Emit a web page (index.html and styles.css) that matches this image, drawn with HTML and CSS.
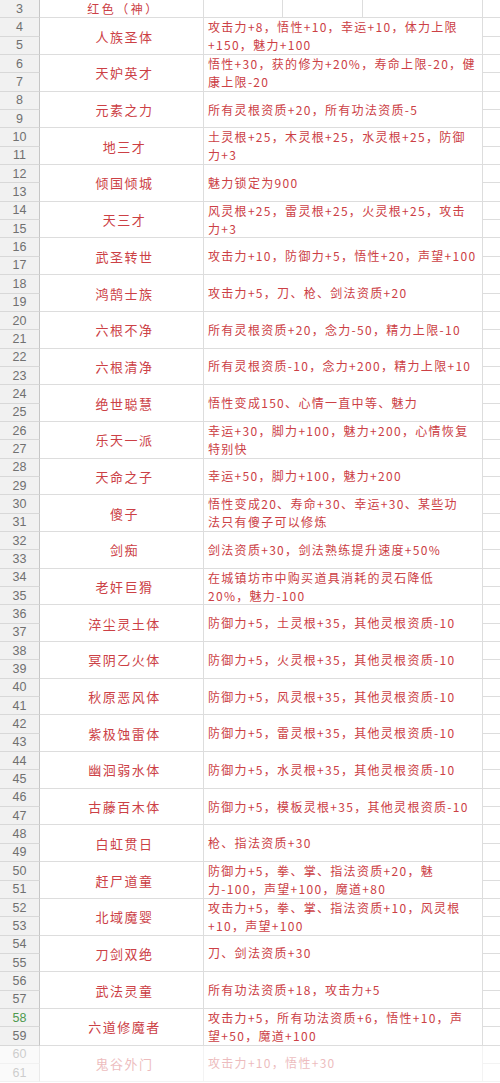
FILE: index.html
```html
<!DOCTYPE html>
<html lang="zh-CN">
<head>
<meta charset="utf-8">
<link rel="stylesheet" href="styles.css">
</head>
<body>
<div class="sheet">
  <div class="hdr">3</div><div class="cell title">红色（神）</div><div class="cell c3"></div><div class="cell d3"></div><div class="cell e3"></div><div class="cell ext"></div>

  <div class="hdr">4</div><div class="cell name">人族圣体</div><div class="cell desc">攻击力+8，悟性+10，幸运+10，体力上限<br>+150，魅力+100</div><div class="cell ext"></div>
  <div class="hdr">5</div><div class="cell ext"></div>

  <div class="hdr">6</div><div class="cell name">天妒英才</div><div class="cell desc">悟性+30，获的修为+20%，寿命上限-20，健<br>康上限-20</div><div class="cell ext"></div>
  <div class="hdr">7</div><div class="cell ext"></div>

  <div class="hdr">8</div><div class="cell name">元素之力</div><div class="cell desc">所有灵根资质+20，所有功法资质-5</div><div class="cell ext"></div>
  <div class="hdr">9</div><div class="cell ext"></div>

  <div class="hdr">10</div><div class="cell name">地三才</div><div class="cell desc">土灵根+25，木灵根+25，水灵根+25，防御<br>力+3</div><div class="cell ext"></div>
  <div class="hdr">11</div><div class="cell ext"></div>

  <div class="hdr">12</div><div class="cell name">倾国倾城</div><div class="cell desc">魅力锁定为900</div><div class="cell ext"></div>
  <div class="hdr">13</div><div class="cell ext"></div>

  <div class="hdr">14</div><div class="cell name">天三才</div><div class="cell desc">风灵根+25，雷灵根+25，火灵根+25，攻击<br>力+3</div><div class="cell ext"></div>
  <div class="hdr">15</div><div class="cell ext"></div>

  <div class="hdr">16</div><div class="cell name">武圣转世</div><div class="cell desc">攻击力+10，防御力+5，悟性+20，声望+100</div><div class="cell ext"></div>
  <div class="hdr">17</div><div class="cell ext"></div>

  <div class="hdr">18</div><div class="cell name">鸿鹄士族</div><div class="cell desc">攻击力+5，刀、枪、剑法资质+20</div><div class="cell ext"></div>
  <div class="hdr">19</div><div class="cell ext"></div>

  <div class="hdr">20</div><div class="cell name">六根不净</div><div class="cell desc">所有灵根资质+20，念力-50，精力上限-10</div><div class="cell ext"></div>
  <div class="hdr">21</div><div class="cell ext"></div>

  <div class="hdr">22</div><div class="cell name">六根清净</div><div class="cell desc">所有灵根资质-10，念力+200，精力上限+10</div><div class="cell ext"></div>
  <div class="hdr">23</div><div class="cell ext"></div>

  <div class="hdr">24</div><div class="cell name">绝世聪慧</div><div class="cell desc">悟性变成150、心情一直中等、魅力</div><div class="cell ext"></div>
  <div class="hdr">25</div><div class="cell ext"></div>

  <div class="hdr">26</div><div class="cell name">乐天一派</div><div class="cell desc">幸运+30，脚力+100，魅力+200，心情恢复<br>特别快</div><div class="cell ext"></div>
  <div class="hdr">27</div><div class="cell ext"></div>

  <div class="hdr">28</div><div class="cell name">天命之子</div><div class="cell desc">幸运+50，脚力+100，魅力+200</div><div class="cell ext"></div>
  <div class="hdr">29</div><div class="cell ext"></div>

  <div class="hdr">30</div><div class="cell name">傻子</div><div class="cell desc">悟性变成20、寿命+30、幸运+30、某些功<br>法只有傻子可以修炼</div><div class="cell ext"></div>
  <div class="hdr">31</div><div class="cell ext"></div>

  <div class="hdr">32</div><div class="cell name">剑痴</div><div class="cell desc">剑法资质+30，剑法熟练提升速度+50%</div><div class="cell ext"></div>
  <div class="hdr">33</div><div class="cell ext"></div>

  <div class="hdr">34</div><div class="cell name">老奸巨猾</div><div class="cell desc">在城镇坊市中购买道具消耗的灵石降低<br>20%，魅力-100</div><div class="cell ext"></div>
  <div class="hdr">35</div><div class="cell ext"></div>

  <div class="hdr">36</div><div class="cell name">淬尘灵土体</div><div class="cell desc">防御力+5，土灵根+35，其他灵根资质-10</div><div class="cell ext"></div>
  <div class="hdr">37</div><div class="cell ext"></div>

  <div class="hdr">38</div><div class="cell name">冥阴乙火体</div><div class="cell desc">防御力+5，火灵根+35，其他灵根资质-10</div><div class="cell ext"></div>
  <div class="hdr">39</div><div class="cell ext"></div>

  <div class="hdr">40</div><div class="cell name">秋原恶风体</div><div class="cell desc">防御力+5，风灵根+35，其他灵根资质-10</div><div class="cell ext"></div>
  <div class="hdr">41</div><div class="cell ext"></div>

  <div class="hdr">42</div><div class="cell name">紫极蚀雷体</div><div class="cell desc">防御力+5，雷灵根+35，其他灵根资质-10</div><div class="cell ext"></div>
  <div class="hdr">43</div><div class="cell ext"></div>

  <div class="hdr">44</div><div class="cell name">幽洄弱水体</div><div class="cell desc">防御力+5，水灵根+35，其他灵根资质-10</div><div class="cell ext"></div>
  <div class="hdr">45</div><div class="cell ext"></div>

  <div class="hdr">46</div><div class="cell name">古藤百木体</div><div class="cell desc">防御力+5，模板灵根+35，其他灵根资质-10</div><div class="cell ext"></div>
  <div class="hdr">47</div><div class="cell ext"></div>

  <div class="hdr">48</div><div class="cell name">白虹贯日</div><div class="cell desc">枪、指法资质+30</div><div class="cell ext"></div>
  <div class="hdr">49</div><div class="cell ext"></div>

  <div class="hdr">50</div><div class="cell name">赶尸道童</div><div class="cell desc">防御力+5，拳、掌、指法资质+20，魅<br>力-100，声望+100，魔道+80</div><div class="cell ext"></div>
  <div class="hdr">51</div><div class="cell ext"></div>

  <div class="hdr">52</div><div class="cell name">北域魔婴</div><div class="cell desc">攻击力+5，拳、掌、指法资质+10，风灵根<br>+10，声望+100</div><div class="cell ext"></div>
  <div class="hdr">53</div><div class="cell ext"></div>

  <div class="hdr">54</div><div class="cell name">刀剑双绝</div><div class="cell desc">刀、剑法资质+30</div><div class="cell ext"></div>
  <div class="hdr">55</div><div class="cell ext"></div>

  <div class="hdr">56</div><div class="cell name">武法灵童</div><div class="cell desc">所有功法资质+18，攻击力+5</div><div class="cell ext"></div>
  <div class="hdr">57</div><div class="cell ext"></div>

  <div class="hdr active">58</div><div class="cell name">六道修魔者</div><div class="cell desc">攻击力+5，所有功法资质+6，悟性+10，声<br>望+50，魔道+100</div><div class="cell ext"></div>
  <div class="hdr">59</div><div class="cell ext"></div>

  <div class="hdr faded">60</div><div class="cell name faded">鬼谷外门</div><div class="cell desc faded">攻击力+10，悟性+30</div><div class="cell ext faded"></div>
  <div class="hdr faded">61</div><div class="cell ext faded"></div>
</div>
</body>
</html>
```

FILE: styles.css
```css
* {
  box-sizing: border-box;
}

html,
body {
  margin: 0;
  padding: 0;
  background: #ffffff;
}

body {
  width: 500px;
  height: 1083px;
  overflow: hidden;
  font-family: "Noto Sans CJK SC", "Noto Sans", sans-serif;
}

.sheet {
  display: grid;
  grid-template-columns: 40px 164px 79px 80px 120px 17px;
  grid-template-rows: repeat(59, 18.356px);
}

.hdr {
  grid-column: 1;
  display: flex;
  align-items: center;
  justify-content: center;
  background: #f1f1f1;
  border-right: 1px solid #c6c6c6;
  border-bottom: 1px solid #d8d8d8;
  color: #707070;
  font: 12.5px "Liberation Sans", "DejaVu Sans", sans-serif;
}

.hdr.active {
  color: #4f9a4f;
}

.cell {
  border-right: 1px solid #dddddd;
  border-bottom: 1px solid #dddddd;
}

.title {
  grid-column: 2;
  display: flex;
  align-items: center;
  justify-content: center;
  padding-left: 4px;
  color: #cc4045;
  font-size: 12px;
  letter-spacing: 2.5px;
}

.name {
  grid-column: 2;
  grid-row: span 2;
  display: flex;
  align-items: center;
  justify-content: center;
  padding-left: 6px;
  color: #cc4045;
  font-size: 13px;
  letter-spacing: 1.5px;
}

.desc {
  grid-column: 3 / span 3;
  grid-row: span 2;
  display: flex;
  align-items: center;
  padding-left: 4px;
  color: #cc4045;
  font-size: 12px;
  line-height: 18px;
  letter-spacing: 1.3px;
  white-space: nowrap;
}

.ext {
  grid-column: 6;
  border-right: none;
}

.faded {
  opacity: 0.35;
}
```
